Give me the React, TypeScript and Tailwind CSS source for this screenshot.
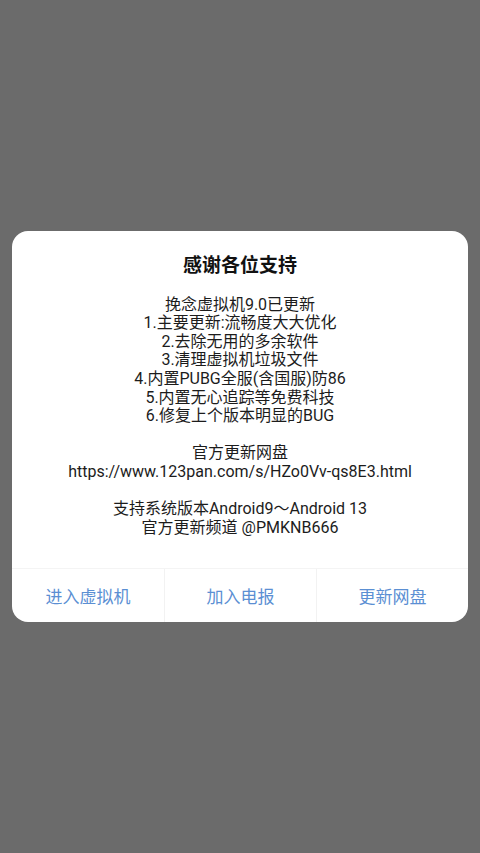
export default function App() {
  const lines = [
    "挽念虚拟机9.0已更新",
    "1.主要更新:流畅度大大优化",
    "2.去除无用的多余软件",
    "3.清理虚拟机垃圾文件",
    "4.内置PUBG全服(含国服)防86",
    "5.内置无心追踪等免费科技",
    "6.修复上个版本明显的BUG",
    "",
    "官方更新网盘",
    "https://www.123pan.com/s/HZo0Vv-qs8E3.html",
    "",
    "支持系统版本Android9～Android 13",
    "官方更新频道 @PMKNB666",
  ];
  const buttons = ["进入虚拟机", "加入电报", "更新网盘"];

  return (
    <div
      className="min-h-screen bg-[#6b6b6b] flex items-center px-3"
      style={{ fontFamily: 'Roboto, "Noto Sans CJK SC", sans-serif' }}
    >
      <div className="w-full bg-white rounded-[16px] overflow-hidden">
        <h1 className="pt-[22px] text-center text-[19px] leading-[25px] font-bold text-[#111]">
          感谢各位支持
        </h1>
        <div className="mt-[18px] text-center text-[16px] leading-[18.6px] text-[#1c1c1c]">
          {lines.map((l, i) => (
            <div key={i} className="h-[18.6px] whitespace-nowrap">
              {l}
            </div>
          ))}
        </div>
        <div className="mt-[31px] grid grid-cols-3 h-[54px] border-t border-[#f4f4f4]">
          {buttons.map((b, i) => (
            <button
              key={b}
              className={`flex items-center justify-center pt-[3px] text-[17px] text-[#5b8fd3] ${
                i > 0 ? "border-l border-[#f2f2f2]" : ""
              }`}
            >
              {b}
            </button>
          ))}
        </div>
      </div>
    </div>
  );
}
